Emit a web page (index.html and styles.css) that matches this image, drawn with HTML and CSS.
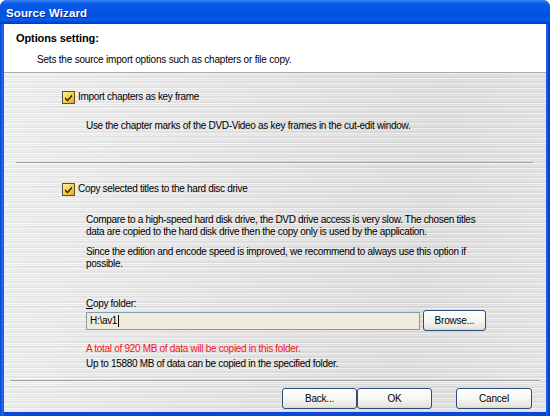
FILE: index.html
```html
<!DOCTYPE html>
<html>
<head>
<meta charset="utf-8">
<link rel="stylesheet" href="styles.css">
</head>
<body>
<div class="window">
  <div class="titlebar"><span class="title">Source Wizard</span></div>
  <div class="client">
    <div class="header">
      <div class="header-title">Options setting:</div>
      <div class="header-sub">Sets the source import options such as chapters or file copy.</div>
    </div>
    <div class="body">
      <div class="check-row first">
        <span class="checkbox"><svg width="9" height="9" viewBox="0 0 9 9"><path d="M1 4 L3.5 6.5 L8 1.5 L8 3.6 L3.5 8.6 L1 6.1 Z" fill="#1a1a1a"/></svg></span>
        <span class="check-label">Import chapters as key frame</span>
      </div>
      <p class="desc d1">Use the chapter marks of the DVD-Video as key frames in the cut-edit window.</p>
      <div class="sep sep-mid"></div>
      <div class="check-row second">
        <span class="checkbox"><svg width="9" height="9" viewBox="0 0 9 9"><path d="M1 4 L3.5 6.5 L8 1.5 L8 3.6 L3.5 8.6 L1 6.1 Z" fill="#1a1a1a"/></svg></span>
        <span class="check-label">Copy selected titles to the hard disc drive</span>
      </div>
      <p class="desc p1">Compare to a high-speed hard disk drive, the DVD drive access is very slow. The chosen titles<br>data are copied to the hard disk drive then the copy only is used by the application.</p>
      <p class="desc p2">Since the edition and encode speed is improved, we recommend to always use this option if<br>possible.</p>
      <div class="desc folder-label"><u>C</u>opy folder:</div>
      <div class="folder-row">
        <div class="input">H:\av1<span class="caret"></span></div>
        <button class="btn browse">Browse...</button>
      </div>
      <p class="desc red">A total of 920 MB of data will be copied in this folder.</p>
      <p class="desc black">Up to 15880 MB of data can be copied in the specified folder.</p>
      <div class="sep sep-bottom"></div>
      <div class="buttons">
        <button class="btn nav back">Back...</button>
        <button class="btn nav ok">OK</button>
        <button class="btn nav cancel">Cancel</button>
      </div>
    </div>
  </div>
</div>
</body>
</html>
```

FILE: styles.css
```css
html, body {
  margin: 0;
  padding: 0;
  background: #ffffff;
}
.window {
  width: 550px;
  height: 416px;
  display: flex;
  flex-direction: column;
  background: linear-gradient(90deg, #0a46d8 0, #1660ea 2px, #2b70ee 3px, #0a46d8 4px, #0a46d8 546px, #2b6ff0 547px, #0a46d8 548px, #0038c8 550px);
  border-radius: 7px 7px 0 0;
  overflow: hidden;
  font-family: "Liberation Sans", Arial, sans-serif;
  font-size: 10px;
  color: #000;
}
.titlebar {
  height: 24px;
  flex: none;
  display: flex;
  align-items: center;
  padding-left: 6px;
  background: linear-gradient(180deg, #3d8df8 0, #1a6cf2 2px, #0a5ae6 4px, #0556e4 9px, #0052e0 16px, #0a5cea 20px, #0048d8 22px, #003cc4 24px);
}
.title {
  color: #fff;
  font-weight: bold;
  font-size: 11.5px;
  letter-spacing: 0.1px;
  text-shadow: 1px 1px 0 #0a2a8a;
  margin-top: 1px;
}
.client {
  flex: 1;
  margin: 0 4px 4px 4px;
  display: flex;
  flex-direction: column;
  background: #ececec;
}
.header {
  height: 49px;
  flex: none;
  background: #ffffff;
  border-bottom: 1px solid #a8a8a8;
  box-sizing: border-box;
  padding: 8px 0 0 12px;
}
.header-title {
  font-weight: bold;
  font-size: 11px;
  line-height: 12px;
  letter-spacing: -0.1px;
}
.header-sub {
  margin-top: 10px;
  margin-left: 21px;
  line-height: 12px;
  letter-spacing: -0.2px;
}
.body {
  flex: 1;
  display: flex;
  flex-direction: column;
  background:
    repeating-linear-gradient(180deg, rgba(255,255,255,0.5) 0 1px, rgba(0,0,0,0.015) 1px 2px, rgba(255,255,255,0.15) 2px 3px, rgba(0,0,0,0.035) 3px 5px),
    linear-gradient(100deg, #f0f0f0 0%, #e6e6e6 40%, #dedede 75%, #e6e6e6 100%);
}
.check-row {
  display: flex;
  align-items: center;
  height: 12px;
  margin-left: 58px;
}
.check-row.first { margin-top: 18px; }
.check-row.second { margin-top: 19px; }
.checkbox {
  width: 11px;
  height: 11px;
  border: 1px solid #5a5030;
  background: linear-gradient(135deg, #fff2a0, #f4c83a 60%, #e8a820);
  display: flex;
  align-items: center;
  justify-content: center;
  flex: none;
}
.check-label {
  margin-left: 3px;
  line-height: 12px;
  letter-spacing: -0.3px;
}
.desc {
  margin: 0 0 0 82px;
  line-height: 12px;
  letter-spacing: -0.3px;
}
.d1 { margin-top: 17px; }
.sep {
  height: 1px;
  background: #9c9c9c;
  border-bottom: 1px solid #fbfbfb;
  flex: none;
}
.sep-mid { margin: 30px 13px 0 12px; }
.p1 { margin-top: 19px; }
.p2 { margin-top: 8px; }
.folder-label { margin-top: 28px; }
.folder-row {
  display: flex;
  align-items: center;
  margin: 0 0 0 82px;
  height: 21px;
}
.input {
  width: 334px;
  height: 18px;
  box-sizing: border-box;
  border: 1px solid #7f9db9;
  background: #f0ecdc;
  padding: 0 3px;
  line-height: 16px;
  letter-spacing: -0.3px;
  display: flex;
  align-items: center;
}
.caret {
  width: 1px;
  height: 12px;
  background: #000;
  margin-left: 1px;
}
.btn {
  font-family: "Liberation Sans", Arial, sans-serif;
  font-size: 10px;
  color: #000;
  letter-spacing: -0.2px;
  border: 1px solid #2c4f7c;
  border-radius: 3px;
  background: linear-gradient(180deg, #ffffff 0%, #f6f6f2 50%, #e8e6dc 90%, #d6d2c2 100%);
  padding: 0;
  box-sizing: border-box;
  height: 21px;
}
.browse {
  width: 63px;
  margin-left: 3px;
}
.red {
  color: #f01818;
  margin-top: 12px;
}
.black { margin-top: 3px; }
.sep-bottom { margin: 10px 6px 0 6px; }
.buttons {
  display: flex;
  justify-content: flex-end;
  margin: 6px 14px 0 0;
}
.nav { width: 75px; }
.cancel { width: 76px; margin-left: 24px; }
```
